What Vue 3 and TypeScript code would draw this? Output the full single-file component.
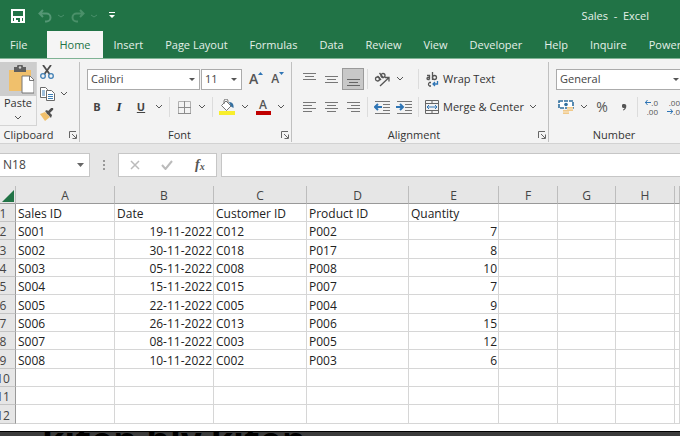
<script setup lang="ts">
import { ref } from 'vue'

interface Sale {
  id: string
  date: string
  customer: string
  product: string
  quantity: number
}

const tabs: string[] = [
  'File', 'Home', 'Insert', 'Page Layout', 'Formulas', 'Data',
  'Review', 'View', 'Developer', 'Help', 'Inquire', 'Power',
]
const activeTab = ref('Home')
const fontName = ref('Calibri')
const fontSize = ref('11')
const numberFormat = ref('General')
const cellName = ref('N18')
const formula = ref('')

const columns: string[] = ['A', 'B', 'C', 'D', 'E', 'F', 'G', 'H', '']
const headings: string[] = ['Sales ID', 'Date', 'Customer ID', 'Product ID', 'Quantity', '', '', '', '']

const sales: Sale[] = [
  { id: 'S001', date: '19-11-2022', customer: 'C012', product: 'P002', quantity: 7 },
  { id: 'S002', date: '30-11-2022', customer: 'C018', product: 'P017', quantity: 8 },
  { id: 'S003', date: '05-11-2022', customer: 'C008', product: 'P008', quantity: 10 },
  { id: 'S004', date: '15-11-2022', customer: 'C015', product: 'P007', quantity: 7 },
  { id: 'S005', date: '22-11-2022', customer: 'C005', product: 'P004', quantity: 9 },
  { id: 'S006', date: '26-11-2022', customer: 'C013', product: 'P006', quantity: 15 },
  { id: 'S007', date: '08-11-2022', customer: 'C003', product: 'P005', quantity: 12 },
  { id: 'S008', date: '10-11-2022', customer: 'C002', product: 'P003', quantity: 6 },
]
const emptyRows: number[] = [10, 11, 12]
</script>

<template>
  <div class="app">
    <header class="titlebar">
      <div class="quick">
        <button class="qbtn" aria-label="Save">
          <svg width="14" height="14" viewBox="0 0 14 14"><path d="M1 1h12v12H1z" fill="none" stroke="#fff" stroke-width="2" /><path d="M1 7h12v2H1zM3 9h2v4H3zM9 9h2v4H9z" fill="#fff" /><path d="M5 10h4v3H5z" fill="#217346" /><path d="M5 11h2v2H5z" fill="#fff" /></svg>
        </button>
        <button class="qbtn split" aria-label="Undo">
          <svg width="14" height="14" viewBox="0 0 14 14" fill="none" stroke="#559775" stroke-width="2"><path d="M5 1L1.500 4.500L5 8M2 4.500h6.500a4 4 0 0 1 0 8H7" /></svg>
          <svg width="6" height="4" viewBox="0 0 6 4"><path d="M0 1l3 2 3-2" fill="none" stroke="#4a8f6b" /></svg>
        </button>
        <button class="qbtn split" aria-label="Redo">
          <svg width="14" height="14" viewBox="0 0 14 14" fill="none" stroke="#4a9069" stroke-width="2"><path d="M9 1l3.500 3.500L9 8M12 4.500H5.500a4 4 0 0 0 0 8H7" /></svg>
          <svg width="6" height="4" viewBox="0 0 6 4"><path d="M0 1l3 2 3-2" fill="none" stroke="#4a8f6b" /></svg>
        </button>
        <button class="qbtn" aria-label="Customize toolbar">
          <svg width="6" height="7" viewBox="0 0 6 7" fill="#fff"><path d="M0 0h6v1H0zM0 3h6L3 6z" /></svg>
        </button>
      </div>
      <div class="doc">Sales&nbsp; -&nbsp; Excel</div>
    </header>

    <nav class="tabs">
      <button v-for="t in tabs" :key="t" class="tab" :class="{ active: t === activeTab }" @click="activeTab = t">{{ t }}</button>
    </nav>

    <section class="ribbon">
      <div class="group clipboard">
        <div class="clip-body">
          <button class="paste">
            <span class="paste-top">
              <svg width="27" height="29" viewBox="0 0 27 29"><path d="M2 5h22v21H2z" fill="#f0c06c" /><path d="M7 2h3a3 3 0 0 1 6 0h3v5H7z" fill="#5f5f5f" /><circle cx="13" cy="2.500" r="1.200" fill="#d0d0d0" /><path d="M15 11h8l4 4v13H15z" fill="#fff" stroke="#777" /><path d="M22.500 11v4.500H27" fill="none" stroke="#777" /></svg>
            </span>
            <span class="paste-label">Paste</span>
            <svg width="6" height="4" viewBox="0 0 6 4"><path d="M0 0l3 3 3-3" fill="none" stroke="#555" /></svg>
          </button>
          <div class="clip-tools">
            <button aria-label="Cut"><svg width="14" height="14" viewBox="0 0 14 14" fill="none"><path d="M3 0l6.500 9M11 0L4.500 9" stroke="#4c4c4c" stroke-width="1.800" /><circle cx="3" cy="11" r="2.300" stroke="#3f7fb5" stroke-width="1.300" /><circle cx="11" cy="11" r="2.300" stroke="#3f7fb5" stroke-width="1.300" /></svg></button>
            <button class="with-arrow" aria-label="Copy">
              <svg width="15" height="14" viewBox="0 0 15 14"><path d="M.5 .5h5l2 2v8h-7z" fill="#fff" stroke="#6a6a6a" /><path d="M2 4h3M2 6h3M2 8h3" stroke="#3f7fb5" /><path d="M6.500 3.500h5l3 3v7h-8z" fill="#fff" stroke="#6a6a6a" /><path d="M8 7.500h5M8 9.500h5M8 11.500h5" stroke="#3f7fb5" /></svg>
              <svg width="6" height="4" viewBox="0 0 6 4"><path d="M0 0l3 3 3-3" fill="none" stroke="#555" /></svg>
            </button>
            <button aria-label="Format Painter"><svg width="14" height="13" viewBox="0 0 14 13"><path d="M0 6l5-2 5 5-5 4z" fill="#f0c06c" /><path d="M5 3l2-1 5 5-1 3z" fill="#505050" /><path d="M8 5l4-4" stroke="#505050" stroke-width="2.500" stroke-linecap="round" /></svg></button>
          </div>
        </div>
        <div class="caption">
          <span>Clipboard</span>
          <button aria-label="Clipboard settings"><svg width="8" height="8" viewBox="0 0 8 8" fill="none" stroke="#666"><path d="M.5 7V.5H7M3 3l4 4M7.500 3.500v4h-4" /></svg></button>
        </div>
      </div>

      <div class="group font">
        <div class="line">
          <label class="combo wide"><select v-model="fontName" aria-label="Font"><option>Calibri</option></select><svg width="6" height="3" viewBox="0 0 6 3"><path d="M0 0h6L3 3z" fill="#555" /></svg></label>
          <label class="combo size"><select v-model="fontSize" aria-label="Font size"><option>11</option></select><svg width="6" height="3" viewBox="0 0 6 3"><path d="M0 0h6L3 3z" fill="#555" /></svg></label>
          <button class="grow" aria-label="Increase font size">A<svg width="5" height="3" viewBox="0 0 5 3"><path d="M0 3h5L2.500 0z" fill="#2f75b5" /></svg></button>
          <button class="grow small" aria-label="Decrease font size">A<svg width="5" height="3" viewBox="0 0 5 3"><path d="M0 0h5L2.500 3z" fill="#2f75b5" /></svg></button>
        </div>
        <div class="line">
          <button class="b22 bold">B</button>
          <button class="b22 italic">I</button>
          <button class="b22 under">U</button>
          <button class="arrow" aria-label="Underline options"><svg width="6" height="4" viewBox="0 0 6 4"><path d="M0 0l3 3 3-3" fill="none" stroke="#555" /></svg></button>
          <i class="sep" />
          <button class="b22" aria-label="Borders"><svg width="13" height="13" viewBox="0 0 13 13" fill="none"><path d="M.5 .5h12v12H.5z" stroke="#b0b0b0" /><path d="M6.500 0v13M0 6.500h13M0 12.500h13" stroke="#8c8c8c" /></svg></button>
          <button class="arrow" aria-label="Border options"><svg width="6" height="4" viewBox="0 0 6 4"><path d="M0 0l3 3 3-3" fill="none" stroke="#555" /></svg></button>
          <i class="sep" />
          <button class="b22" aria-label="Fill color"><svg width="16" height="16" viewBox="0 0 16 16"><path d="M0 12h16v4H0z" fill="#f8ee2c" /><path d="M2.500 6.500L7 2l5 5-4.500 4.500z" fill="#fff" stroke="#777" /><path d="M5 5V2a2 2 0 0 1 4 0v2" fill="none" stroke="#777" /><path d="M10 3c3 0 5 2 4.500 6L12 7.500z" fill="#356f9f" /></svg></button>
          <button class="arrow" aria-label="Fill color options"><svg width="6" height="4" viewBox="0 0 6 4"><path d="M0 0l3 3 3-3" fill="none" stroke="#555" /></svg></button>
          <button class="b22 color" aria-label="Font color"><span>A</span></button>
          <button class="arrow" aria-label="Font color options"><svg width="6" height="4" viewBox="0 0 6 4"><path d="M0 0l3 3 3-3" fill="none" stroke="#555" /></svg></button>
        </div>
        <div class="caption">
          <span>Font</span>
          <button aria-label="Font settings"><svg width="8" height="8" viewBox="0 0 8 8" fill="none" stroke="#666"><path d="M.5 7V.5H7M3 3l4 4M7.500 3.500v4h-4" /></svg></button>
        </div>
      </div>

      <div class="group align">
        <div class="line">
          <button class="b22" aria-label="Top Align"><svg width="13" height="13" viewBox="0 0 13 13" stroke="#777"><path d="M0 .5h13M2 3.500h9M0 6.500h13" /></svg></button>
          <button class="b22" aria-label="Middle Align"><svg width="13" height="13" viewBox="0 0 13 13" stroke="#777"><path d="M0 3.500h13M2 6.500h9M0 9.500h13" /></svg></button>
          <button class="b22 pressed" aria-label="Bottom Align"><svg width="13" height="13" viewBox="0 0 13 13" stroke="#666"><path d="M0 6.500h13M2 9.500h9M0 12.500h13" /></svg></button>
          <i class="sep" />
          <button class="b22" aria-label="Orientation"><svg width="16" height="15" viewBox="0 0 16 15" fill="none" stroke="#555" stroke-width="1.300"><circle cx="3.500" cy="7" r="2" /><path d="M3.500 4l3.500 4M5.500 1l4 5" /><circle cx="9" cy="3.500" r="2" /><path d="M6 14l8.500-8M11 5.500h4v4" /></svg></button>
          <button class="arrow" aria-label="Orientation options"><svg width="6" height="4" viewBox="0 0 6 4"><path d="M0 0l3 3 3-3" fill="none" stroke="#555" /></svg></button>
          <i class="sep far" />
          <button class="text"><svg width="14" height="15" viewBox="0 0 14 15" fill="none" stroke="#555" stroke-width="1.300"><path d="M2 3.500h2.500v4M4.500 5.500H3a1 1 0 0 0 0 2h1.500M7.500 0v8" /><circle cx="9.500" cy="5.500" r="2" /><path d="M6 10.500H4.500a2 2 0 0 0 0 3.500H6" /><path d="M12.500 9v3H8M10 10l-2 2 2 2" stroke="#2f75b5" /></svg>Wrap Text</button>
        </div>
        <div class="line">
          <button class="b22" aria-label="Align Left"><svg width="13" height="11" viewBox="0 0 13 11" stroke="#777"><path d="M0 .5h13M0 3.500h9M0 6.500h13M0 9.500h9" /></svg></button>
          <button class="b22" aria-label="Center"><svg width="13" height="11" viewBox="0 0 13 11" stroke="#777"><path d="M0 .5h13M2 3.500h9M0 6.500h13M2 9.500h9" /></svg></button>
          <button class="b22" aria-label="Align Right"><svg width="13" height="11" viewBox="0 0 13 11" stroke="#777"><path d="M0 .5h13M4 3.500h9M0 6.500h13M4 9.500h9" /></svg></button>
          <i class="sep" />
          <button class="b22" aria-label="Decrease Indent"><svg width="16" height="13" viewBox="0 0 16 13" fill="none" stroke="#777"><path d="M1 .5h15M9 3.500h7M9 6.500h7M9 9.500h7M1 12.500h15" /><path d="M1 6h7M4 3L1 6l3 3" stroke="#2f75b5" stroke-width="2" /></svg></button>
          <button class="b22" aria-label="Increase Indent"><svg width="16" height="13" viewBox="0 0 16 13" fill="none" stroke="#777"><path d="M1 .5h15M9 3.500h7M9 6.500h7M9 9.500h7M1 12.500h15" /><path d="M0 6h6M4 3l3 3-3 3" stroke="#2f75b5" stroke-width="2" /></svg></button>
          <i class="sep" />
          <button class="text"><svg width="14" height="14" viewBox="0 0 14 14" fill="none" stroke="#666"><path d="M.5 .5h13v13H.5zM0 3.500h14M0 10.500h14M7 0v3.500M7 10.500V14" /><path d="M2 7h10M4 5L2 7l2 2M10 5l2 2-2 2" stroke="#2f75b5" /></svg>Merge &amp; Center</button>
          <button class="arrow" aria-label="Merge options"><svg width="6" height="4" viewBox="0 0 6 4"><path d="M0 0l3 3 3-3" fill="none" stroke="#555" /></svg></button>
        </div>
        <div class="caption">
          <span>Alignment</span>
          <button aria-label="Alignment settings"><svg width="8" height="8" viewBox="0 0 8 8" fill="none" stroke="#666"><path d="M.5 7V.5H7M3 3l4 4M7.500 3.500v4h-4" /></svg></button>
        </div>
      </div>

      <div class="group number">
        <div class="line">
          <label class="combo format"><select v-model="numberFormat" aria-label="Number format"><option>General</option></select><svg width="6" height="3" viewBox="0 0 6 3"><path d="M0 0h6L3 3z" fill="#555" /></svg></label>
        </div>
        <div class="line">
          <button class="b22" aria-label="Accounting format"><svg width="16" height="15" viewBox="0 0 16 15"><path d="M1 1h14v7H1z" fill="#fff" stroke="#2f6f9f" stroke-width="1.600" stroke-dasharray="4 1" /><circle cx="8" cy="4.500" r="1.800" fill="#2f6f9f" /><path d="M9 7h6v4H9zM5 10h6v4H5z" fill="#f0c98a" /><path d="M9 9h6M5 12h6" stroke="#fff" stroke-width=".6" /></svg></button>
          <button class="arrow" aria-label="Accounting options"><svg width="6" height="4" viewBox="0 0 6 4"><path d="M0 0l3 3 3-3" fill="none" stroke="#555" /></svg></button>
          <button class="b22 percent">%</button>
          <button class="b22 comma" aria-label="Comma Style"><svg width="5" height="7" viewBox="0 0 5 7"><path d="M2.300 0a2 2 0 0 1 2 2.200C4.300 4.500 3 6 1 6.500V5.500c1-.4 1.400-1 1.400-1.600A2 2 0 1 1 2.300 0z" fill="#555" /></svg></button>
          <i class="sep" />
          <button class="decimal" aria-label="Increase Decimal"><span><svg width="6" height="5" viewBox="0 0 6 5" fill="none" stroke="#2f75b5"><path d="M0 2.500h6M2.500 0L.5 2.500l2 2.500" /></svg>.0</span><span>.00</span></button>
          <button class="decimal" aria-label="Decrease Decimal"><span>.00</span><span><svg width="6" height="5" viewBox="0 0 6 5" fill="none" stroke="#2f75b5"><path d="M0 2.500h6M3.500 0l2 2.500-2 2.500" /></svg>.0</span></button>
        </div>
        <div class="caption"><span>Number</span></div>
      </div>
    </section>

    <section class="formula-bar">
      <label class="name-box"><input v-model="cellName" aria-label="Name box"><svg width="7" height="4" viewBox="0 0 7 4"><path d="M0 0h7L3.500 4z" fill="#666" /></svg></label>
      <svg class="dots" width="2" height="11" viewBox="0 0 2 11" fill="#999"><path d="M0 0h2v2H0zM0 4h2v2H0zM0 8h2v2H0z" /></svg>
      <div class="fx-box">
        <button aria-label="Cancel"><svg width="10" height="10" viewBox="0 0 10 10"><path d="M1 1l8 8M9 1L1 9" stroke="#bbb" stroke-width="1.500" /></svg></button>
        <button aria-label="Enter"><svg width="12" height="10" viewBox="0 0 12 10"><path d="M1 5l3.500 4L11 1" fill="none" stroke="#bbb" stroke-width="2" /></svg></button>
        <button class="fx" aria-label="Insert Function">f<small>x</small></button>
      </div>
      <input v-model="formula" class="formula" aria-label="Formula">
    </section>

    <main class="sheet">
      <table>
        <colgroup>
          <col class="c-num"><col class="c-a"><col class="c-a"><col class="c-c"><col class="c-d"><col class="c-e"><col class="c-f"><col class="c-g"><col class="c-f"><col>
        </colgroup>
        <thead>
          <tr>
            <th class="corner"><svg width="12" height="12" viewBox="0 0 12 12"><path d="M12 0v12H0z" fill="#217346" /></svg></th>
            <th v-for="(c, i) in columns" :key="i">{{ c }}</th>
          </tr>
        </thead>
        <tbody>
          <tr>
            <th>1</th>
            <td v-for="(h, i) in headings" :key="i">{{ h }}</td>
          </tr>
          <tr v-for="(s, i) in sales" :key="s.id">
            <th>{{ i + 2 }}</th>
            <td>{{ s.id }}</td>
            <td class="right">{{ s.date }}</td>
            <td>{{ s.customer }}</td>
            <td>{{ s.product }}</td>
            <td class="right">{{ s.quantity }}</td>
            <td /><td /><td /><td />
          </tr>
          <tr v-for="n in emptyRows" :key="n">
            <th>{{ n }}</th>
            <td v-for="(c, i) in columns" :key="i" />
          </tr>
        </tbody>
      </table>
    </main>
    <footer class="backdrop"><span>kiton hly kiton</span></footer>
  </div>
</template>

<style>
body { margin: 0; overflow: hidden; }
</style>

<style scoped>
.app {
  display: flex;
  flex-direction: column;
  height: 100vh;
  overflow: hidden;
  background: #fff;
  color: #333;
  font: 11px/14px "Open Sans", "Noto Sans", sans-serif;
}
svg { display: block; flex: none; }
button {
  display: flex;
  flex: none;
  align-items: center;
  justify-content: center;
  margin: 0;
  padding: 0;
  border: 0;
  background: none;
  color: inherit;
  font: inherit;
  white-space: nowrap;
}
input, select {
  box-sizing: border-box;
  width: 100%;
  margin: 0;
  border: 0;
  outline: 0;
  background: none;
  color: #444;
  font: inherit;
  appearance: none;
}

.titlebar {
  display: flex;
  flex: none;
  align-items: center;
  justify-content: space-between;
  height: 31px;
  padding: 0 31px 0 11px;
  background: #217346;
  color: #e4f0e8;
}
.quick { display: flex; align-items: center; gap: 12px; }
.qbtn { gap: 6px; }
.qbtn.split { margin-right: -6px; padding-left: 1px; }
.qbtn:last-child { margin-left: 6px; }

.tabs {
  display: flex;
  flex: none;
  height: 27px;
  overflow: hidden;
  background: #217346;
}
.tab { padding: 0 11px; color: #e4f0e8; }
.tab:first-child { padding: 0 20px 0 10px; }
.tab.active { padding: 0 12px; background: #f5f5f5; color: #217346; }

.ribbon {
  display: flex;
  flex: none;
  box-sizing: border-box;
  height: 86px;
  padding: 3px 0 1px;
  overflow: hidden;
  border-top: 1px solid #7fb394;
  border-bottom: 1px solid #d2d2d2;
  background: #f3f3f3;
}
.group {
  display: flex;
  flex: none;
  flex-direction: column;
  box-sizing: border-box;
  border-right: 1px solid #c0c0c0;
}
.group:last-child { border-right: 0; }
.clipboard { width: 80px; }
.font { width: 212px; padding-left: 6px; }
.align { width: 257px; padding-left: 6px; }
.number { width: 142px; padding-left: 6px; }
.line { display: flex; align-items: center; height: 29px; padding-top: 5px; box-sizing: border-box; }
.line + .line { padding-top: 3px; }
.caption { display: flex; align-items: center; margin-top: auto; height: 14px; }
.caption span { flex: 1; text-align: center; }
.caption button { width: 12px; }
.clipboard .caption span { padding-right: 10px; }
.font .caption, .align .caption { margin-left: -6px; }
.number .caption { margin-left: -18px; }

.clip-body { display: flex; height: 64px; gap: 3px; }
.paste {
  flex-direction: column;
  justify-content: flex-start;
  box-sizing: border-box;
  width: 37px;
  border: 1px solid #d4d4d4;
  border-width: 0 1px 1px 0;
}
.paste-top { display: flex; align-items: center; justify-content: center; width: 100%; height: 34px; background: #cdcdcd; }
.paste-top svg { margin-left: 4px; }
.paste-label { padding-bottom: 6px; }
.clip-tools { display: flex; flex-direction: column; align-items: flex-start; justify-content: space-between; padding: 3px 0 5px; }
.with-arrow { gap: 6px; }

.combo { display: flex; align-items: center; box-sizing: border-box; height: 21px; padding-right: 4px; border: 1px solid #ababab; background: #fff; }
.combo select { padding: 0 0 0 3px; }
.wide { width: 113px; }
.size { width: 41px; margin-left: 1px; }
.format { width: 128px; }
.wide, .format { margin-left: 1px; }
.grow { align-items: flex-start; margin-left: 7px; color: #555; font-size: 14px; font-weight: 600; }
.grow.small { margin-left: 8px; font-size: 12px; }
.b22 { width: 22px; height: 22px; }
.arrow { width: 14px; height: 22px; }
.bold { font-weight: 700; color: #444; }
.italic { font: italic 700 13px "Liberation Serif", serif; }
.under { font-weight: 700; color: #444; text-decoration: underline; }
.sep { flex: none; width: 1px; height: 20px; margin: 0 3px; background: #dcdcdc; }
.sep.far { margin-left: 11px; }
.color span { width: 15px; border-bottom: 4px solid #c00000; color: #555; font-size: 12px; font-weight: 600; line-height: 12px; }
.pressed { box-sizing: border-box; border: 1px solid #9a9a9a; background: #c8c8c8; }
.text { gap: 4px; margin-left: 3px; }
.text + .arrow { margin-left: 2px; }
.percent { color: #555; font-size: 14px; }
.number .sep { margin: 0 4px 0 2px; }
.decimal { flex-direction: column; align-items: flex-end; width: 16px; margin-right: 6px; color: #555; font-size: 8px; line-height: 9px; }
.decimal span { display: flex; align-items: center; }

.formula-bar { display: flex; flex: none; align-items: center; height: 42px; background: #e6e6e6; }
.name-box, .fx-box { display: flex; align-items: center; box-sizing: border-box; height: 24px; border: 1px solid #c6c6c6; background: #fff; }
.name-box { width: 90px; padding-right: 5px; border-left: 0; }
.name-box input { padding: 0 3px; font-size: 12px; }
.dots { margin: 0 13px; }
.fx-box { width: 99px; }
.fx-box button { flex: 1; }
.fx-box .fx { font: italic 700 14px "Liberation Serif", serif; color: #555; }
.fx small { padding-top: 3px; font-size: 10px; }
.formula { flex: 1; width: 0; height: 24px; margin-left: 4px; padding: 0 4px; border: 1px solid #c6c6c6; border-right: 0; background: #fff; }

.sheet { flex: 1; overflow: hidden; min-height: 0; }
table {
  width: calc(100% + 9px);
  margin-left: -9px;
  border-spacing: 0;
  table-layout: fixed;
  color: #222;
  font-size: 12px;
  line-height: 15px;
}
.c-num { width: 25px; }
.c-a { width: 99px; }
.c-c { width: 93px; }
.c-d { width: 102px; }
.c-e { width: 90px; }
.c-f { width: 59px; }
.c-g { width: 58px; }
tr { height: 18px; }
tbody tr:nth-child(3n) { height: 19px; }
th, td { box-sizing: border-box; padding: 2px 1px 0; border: 0 solid #d6d6d6; border-width: 0 1px 1px 0; white-space: nowrap; }
th { background: #e6e6e6; color: #444; font-weight: 400; text-align: center; }
thead th { border-color: #bdbdbd; border-bottom-color: #999; }
tbody th { border-color: #c4c4c4; border-right-color: #999; }
.corner svg { margin-left: auto; }
td { padding-left: 2px; text-align: left; }
td.right { text-align: right; }

.backdrop { flex: none; height: 4px; padding-left: 42px; overflow: hidden; border-top: 1px solid #000; background: #3c3c3c; color: #000; font-size: 36px; font-weight: 700; line-height: 16px; white-space: nowrap; }
</style>
